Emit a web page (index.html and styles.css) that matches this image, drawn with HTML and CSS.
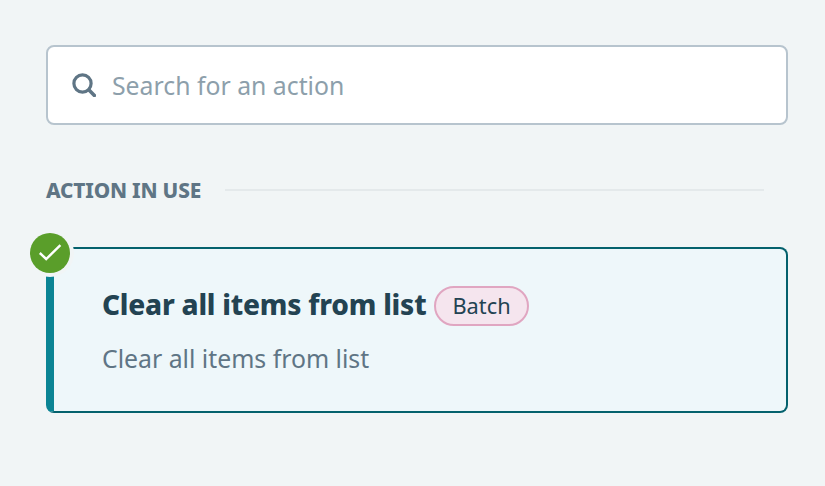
FILE: index.html
```html
<!DOCTYPE html>
<html lang="en">
<head>
  <meta charset="UTF-8">
  <title>Actions</title>
  <link rel="stylesheet" href="styles.css">
</head>
<body>
  <div class="wrap">
    <div class="search">
      <svg class="search_icon" width="24" height="24" viewBox="0 0 24 24" fill="none" stroke="#5f7585" stroke-linecap="round">
        <circle cx="10.5" cy="10.5" r="8.6" stroke-width="3.2"/>
        <path d="M17 17L22.4 22.4" stroke-width="3.6"/>
      </svg>
      <span class="placeholder">Search for an action</span>
    </div>
    <div class="section">
      <span class="section_title">ACTION IN USE</span>
      <span class="section_line"></span>
    </div>
    <div class="card">
      <span class="check">
        <svg width="26" height="26" viewBox="0 0 26 26" fill="none" stroke="#fff" stroke-width="2.4">
          <path d="M2.8 13L9.2 19L23.4 5.2"/>
        </svg>
      </span>
      <div class="card_head">
        <span class="card_title">Clear all items from list</span>
        <span class="badge">Batch</span>
      </div>
      <p class="card_text">Clear all items from list</p>
    </div>
  </div>
</body>
</html>
```
FILE: styles.css
```css
html, body{
  height: 100%;
  overflow: hidden;
}
body{
  margin: 0;
  padding: 0;
  background: #f1f5f6;
  font-family: "Noto Sans", sans-serif;
}
.wrap{
  box-sizing: border-box;
  width: 825px;
  height: 486px;
  padding: 45px 37px 0 46px;
}
.search{
  display: flex;
  align-items: center;
  gap: 16px;
  box-sizing: border-box;
  height: 80px;
  padding-left: 24px;
  background: #fff;
  border: 2px solid #b7c4ce;
  border-radius: 8px;
}
.placeholder{
  font-size: 24.8px;
  color: #8d9fab;
}
.section{
  display: flex;
  align-items: center;
  gap: 24px;
  height: 26px;
  margin: 52px 24px 0 0;
}
.section_title{
  font-size: 20.8px;
  font-weight: 800;
  letter-spacing: -0.2px;
  color: #5f7585;
}
.section_line{
  flex: 1;
  height: 2px;
  background: #e4e9eb;
}
.card{
  position: relative;
  box-sizing: border-box;
  height: 166px;
  margin-top: 44px;
  padding: 37px 0 0 48px;
  background: #eef7fa;
  border: 2px solid #04616d;
  border-left: 8px solid #0b8494;
  border-radius: 8px;
}
.check{
  position: absolute;
  left: -24px;
  top: -16px;
  display: flex;
  align-items: center;
  justify-content: center;
  width: 40px;
  height: 40px;
  background: #5a9e2a;
  border-radius: 50%;
  box-shadow: 0 0 0 4px #f1f5f6;
}
.card_head{
  display: flex;
  align-items: flex-start;
  gap: 8px;
}
.card_title{
  font-size: 28px;
  font-weight: 800;
  letter-spacing: -0.22px;
  line-height: 36px;
  color: #234352;
}
.badge{
  box-sizing: border-box;
  height: 40px;
  padding: 0 16px;
  font-size: 21.8px;
  line-height: 35px;
  color: #234352;
  background: #f5e5ee;
  border: 2px solid #e0a6c1;
  border-radius: 20px;
}
.card_text{
  margin: 15px 0 0;
  font-size: 24.8px;
  color: #5f7585;
}
```
